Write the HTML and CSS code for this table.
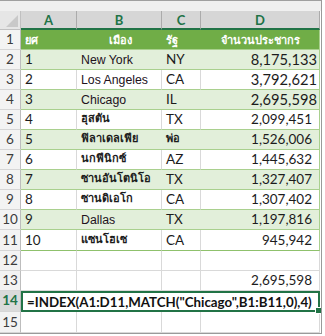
FILE: index.html
```html
<!DOCTYPE html>
<html lang="th">
<head>
<meta charset="utf-8">
<title>INDEX MATCH</title>
<link rel="stylesheet" href="styles.css">
</head>
<body>
<div class="sheet">
  <div class="topbar"></div>
  <div class="grid">
    <div class="corner"><span class="tri"></span></div>
    <div class="colh">A</div>
    <div class="colh">B</div>
    <div class="colh">C</div>
    <div class="colh">D</div>

    <div class="rowh">1</div>
    <div class="c th">ยศ</div>
    <div class="c th center">เมือง</div>
    <div class="c th">รัฐ</div>
    <div class="c th center last">จำนวนประชากร</div>

    <div class="rowh">2</div>
    <div class="c band num-l">1</div>
    <div class="c band en">New York</div>
    <div class="c band">NY</div>
    <div class="c band num big last">8,175,133</div>

    <div class="rowh">3</div>
    <div class="c plain num-l">2</div>
    <div class="c plain en">Los Angeles</div>
    <div class="c plain">CA</div>
    <div class="c plain num big last">3,792,621</div>

    <div class="rowh">4</div>
    <div class="c band num-l">3</div>
    <div class="c band en">Chicago</div>
    <div class="c band">IL</div>
    <div class="c band num big last">2,695,598</div>

    <div class="rowh">5</div>
    <div class="c plain num-l">4</div>
    <div class="c plain thai">ฮุสตัน</div>
    <div class="c plain">TX</div>
    <div class="c plain num last">2,099,451</div>

    <div class="rowh">6</div>
    <div class="c band num-l">5</div>
    <div class="c band thai">ฟิลาเดลเฟีย</div>
    <div class="c band thai">พ่อ</div>
    <div class="c band num last">1,526,006</div>

    <div class="rowh">7</div>
    <div class="c plain num-l">6</div>
    <div class="c plain thai">นกฟีนิกซ์</div>
    <div class="c plain">AZ</div>
    <div class="c plain num last">1,445,632</div>

    <div class="rowh">8</div>
    <div class="c band num-l">7</div>
    <div class="c band thai">ซานอันโตนิโอ</div>
    <div class="c band">TX</div>
    <div class="c band num last">1,327,407</div>

    <div class="rowh">9</div>
    <div class="c plain num-l">8</div>
    <div class="c plain thai">ซานดิเอโก</div>
    <div class="c plain">CA</div>
    <div class="c plain num last">1,307,402</div>

    <div class="rowh">10</div>
    <div class="c band num-l">9</div>
    <div class="c band en">Dallas</div>
    <div class="c band">TX</div>
    <div class="c band num last">1,197,816</div>

    <div class="rowh">11</div>
    <div class="c plain end num-l">10</div>
    <div class="c plain end thai">แซนโฮเซ</div>
    <div class="c plain end">CA</div>
    <div class="c plain end num last">945,942</div>

    <div class="rowh">12</div>
    <div class="c empty"></div>
    <div class="c empty"></div>
    <div class="c empty"></div>
    <div class="c empty"></div>

    <div class="rowh">13</div>
    <div class="c empty"></div>
    <div class="c empty"></div>
    <div class="c empty"></div>
    <div class="c empty num">2,695,598</div>

    <div class="rowh sel">14</div>
    <div class="selbox">=INDEX(A1:D11,MATCH("Chicago",B1:B11,0),4)<span class="handle"></span></div>

    <div class="rowh">15</div>
    <div class="c empty"></div>
    <div class="c empty"></div>
    <div class="c empty"></div>
    <div class="c empty"></div>
  </div>
</div>
</body>
</html>
```

FILE: styles.css
```css
html, body {
  margin: 0;
  padding: 0;
  background: #ffffff;
}

.sheet {
  width: 321px;
  height: 333px;
  border-right: 1px solid #9a9a9a;
  border-bottom: 1px solid #9a9a9a;
  background: #ffffff;
  font-family: Lato, "Liberation Sans", sans-serif;
  overflow: hidden;
}

.topbar {
  height: 11px;
  background: #f0f0f0;
  border-top: 1px solid #a0a0a0;
  box-sizing: border-box;
}

.grid {
  display: grid;
  grid-template-columns: 21px 56px 85px 39px 119px;
  grid-template-rows: 19px repeat(10, 20px) 21px 20px 20px 21px 21px;
}

.corner {
  position: relative;
  background: #e6e6e6;
  border-right: 1px solid #c0c0c0;
  border-bottom: 1px solid #c0c0c0;
  box-sizing: border-box;
}

.tri {
  position: absolute;
  right: 2px;
  bottom: 2px;
  width: 0;
  height: 0;
  border-left: 12px solid transparent;
  border-bottom: 12px solid #c9c9c9;
}

.colh {
  display: flex;
  align-items: center;
  justify-content: center;
  background: #d6d6d6;
  border-right: 1px solid #ababab;
  border-bottom: 2px solid #217346;
  box-sizing: border-box;
  color: #217346;
  font-weight: 700;
  font-size: 13px;
}

.rowh {
  display: flex;
  align-items: flex-end;
  justify-content: center;
  padding-bottom: 2px;
  background: #f3f3f3;
  border-right: 1px solid #bdbdbd;
  border-bottom: 1px solid #d6d6d6;
  box-sizing: border-box;
  color: #3c3c3c;
  font-size: 13.5px;
  line-height: 16px;
}

.rowh.sel {
  background: #dadada;
  color: #217346;
  font-weight: 700;
  padding-bottom: 3px;
}

.c {
  display: flex;
  align-items: flex-end;
  padding: 0 3px 2px 4px;
  box-sizing: border-box;
  font-size: 13.5px;
  line-height: 16px;
  color: #1c1c1c;
  white-space: nowrap;
  overflow: visible;
}

.th {
  background: #70ad47;
  color: #ffffff;
  font-size: 11px;
  font-weight: 700;
  border-bottom: 1px solid #a9d08e;
  padding-bottom: 1px;
}

.center {
  justify-content: center;
}

.band {
  background: #e2efda;
  border-bottom: 1px solid #a9d08e;
}

.plain {
  background: #ffffff;
  border-right: 1px solid #d9d9d9;
  border-bottom: 1px solid #a9d08e;
}

.last {
  border-right: 1px solid #a9d08e;
}

.end {
  border-bottom: 1px solid #8fc16c;
}

.empty {
  border-right: 1px solid #d9d9d9;
  border-bottom: 1px solid #d9d9d9;
}

.num {
  justify-content: flex-end;
  padding-right: 7px;
}

.num.big {
  font-size: 14.7px;
  padding-right: 2px;
}

.en {
  font-family: "Liberation Sans", Arial, sans-serif;
  font-size: 12.3px;
  color: #22121c;
  padding-bottom: 1px;
}

.thai {
  font-size: 11px;
  font-weight: 700;
  padding-bottom: 3px;
}

.selbox {
  grid-column: 2 / 6;
  position: relative;
  display: flex;
  align-items: center;
  padding-left: 4px;
  border: 2px solid #217346;
  box-sizing: border-box;
  font-weight: 700;
  font-size: 13.3px;
  color: #111111;
  white-space: nowrap;
}

.handle {
  position: absolute;
  right: -4px;
  bottom: -4px;
  width: 5px;
  height: 5px;
  background: #217346;
  border: 1px solid #ffffff;
}
```
